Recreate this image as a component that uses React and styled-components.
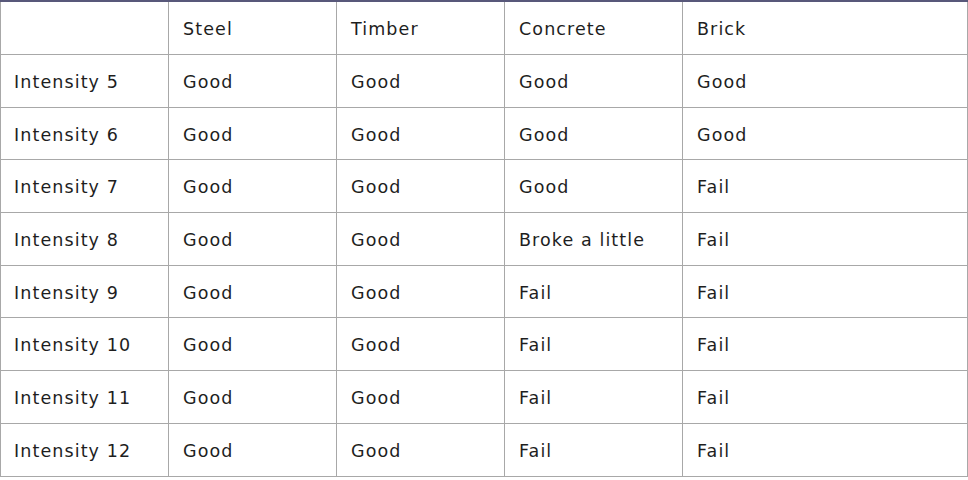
import React from "react";
import styled, { createGlobalStyle } from "styled-components";

const GlobalStyle = createGlobalStyle`
  html, body {
    margin: 0;
    padding: 0;
    background: #ffffff;
  }
`;

const Page = styled.div`
  width: 968px;
  font-family: "DejaVu Sans", "Noto Sans", sans-serif;
  color: #1e1e1e;
`;

const Table = styled.table`
  width: 967px;
  border-collapse: collapse;
  table-layout: fixed;
`;

const Col = styled.col`
  width: ${props => props.w}px;
`;

const Cell = styled.td`
  height: ${props => (props.head ? 50 : 49.7)}px;
  padding: 2px 0 0 ${props => (props.first ? 13 : 14)}px;
  border: 1px solid #a8a8a8;
  border-top: ${props => (props.head ? "2px solid #58587a" : "1px solid #a8a8a8")};
  font-size: 17.5px;
  letter-spacing: 1.1px;
  white-space: nowrap;
  vertical-align: middle;
`;

const columns = ["Steel", "Timber", "Concrete", "Brick"];

const rows = [
  ["Intensity 5", "Good", "Good", "Good", "Good"],
  ["Intensity 6", "Good", "Good", "Good", "Good"],
  ["Intensity 7", "Good", "Good", "Good", "Fail"],
  ["Intensity 8", "Good", "Good", "Broke a little", "Fail"],
  ["Intensity 9", "Good", "Good", "Fail", "Fail"],
  ["Intensity 10", "Good", "Good", "Fail", "Fail"],
  ["Intensity 11", "Good", "Good", "Fail", "Fail"],
  ["Intensity 12", "Good", "Good", "Fail", "Fail"]
];

const App = () => (
  <>
    <GlobalStyle />
    <Page>
      <Table>
        <colgroup>
          <Col w={168} />
          <Col w={168} />
          <Col w={168} />
          <Col w={178} />
          <Col w={285} />
        </colgroup>
        <tbody>
          <tr>
            <Cell head first />
            {columns.map(c => (
              <Cell head key={c}>
                {c}
              </Cell>
            ))}
          </tr>
          {rows.map(row => (
            <tr key={row[0]}>
              {row.map((value, i) => (
                <Cell key={i} first={i === 0}>
                  {value}
                </Cell>
              ))}
            </tr>
          ))}
        </tbody>
      </Table>
    </Page>
  </>
);

export default App;
